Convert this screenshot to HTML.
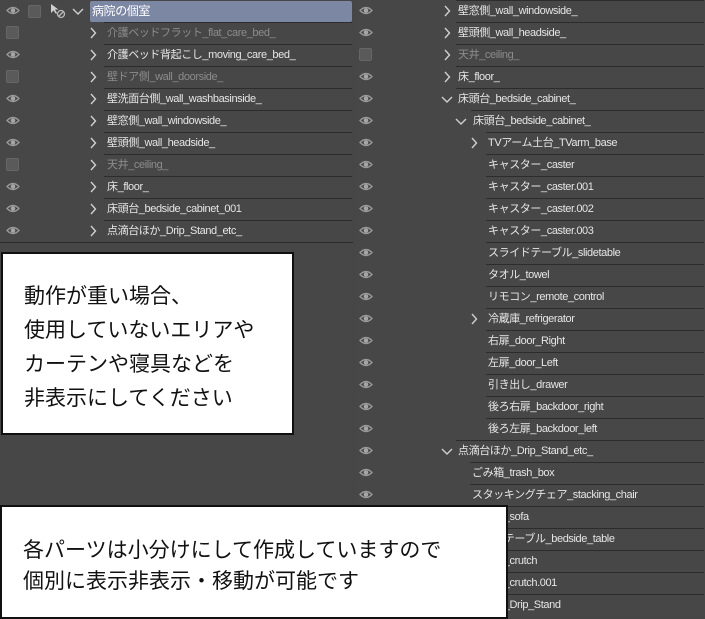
<!DOCTYPE html>
<html><head><meta charset="utf-8"><style>
*{margin:0;padding:0;box-sizing:border-box}
body{width:705px;height:617px;background:#464646;position:relative;overflow:hidden;font-family:"Liberation Sans","Noto Sans CJK JP",sans-serif;}
.p{position:absolute;top:0;height:617px;background:#474747}
.r{position:absolute;height:22px;left:0;width:100%}
.t{position:absolute;top:3px;font-size:11px;color:#e6e6e6;white-space:nowrap;letter-spacing:-0.4px;line-height:16px}
.g{color:#8c8c8c}
.ln{position:absolute;top:0;height:1px;background:#2c2c2c}
.eye{position:absolute;top:6px;width:14px;height:9px}
.cb{position:absolute;top:4px;width:13px;height:13px;background:#5a5a5a;border:1px solid #666;border-radius:2px}
.ch{position:absolute;top:5px;width:8px;height:12px}
.box{position:absolute;background:#fff;border:2px solid #111;color:#111;font-family:"Liberation Sans","Noto Sans CJK JP",sans-serif;font-size:21px}
</style></head><body>
<svg width="0" height="0" style="position:absolute"><defs>
<g id="e"><path d="M1 4.5 Q7 -1.5 13 4.5 Q7 10.5 1 4.5Z" fill="none" stroke="#9a9a9a" stroke-width="1.3"/><circle cx="7" cy="4.5" r="2.3" fill="#a5a5a5"/></g>
<g id="c"><path d="M2 1 L6.5 6 L2 11" fill="none" stroke="#cfcfcf" stroke-width="1.4"/></g>
<g id="d"><path d="M1 3 L6 8 L11 3" fill="none" stroke="#cfcfcf" stroke-width="1.4"/></g>
</defs></svg>

<div class="p" style="left:0;width:353px" id="L"></div>
<div class="p" style="left:355px;width:350px" id="R"></div>

<div class="box" style="left:1px;top:252px;width:293px;height:183px;padding:26px 0 0 21px;line-height:34px">動作が重い場合、<br>使用していないエリアや<br>カーテンや寝具などを<br>非表示にしてください</div>
<div class="box" style="left:0;top:505px;width:508px;height:114px;padding:28px 0 0 21px;line-height:31px">各パーツは小分けにして作成していますので<br>個別に表示非表示・移動が可能です</div>

<script>
function row(p,i,o){
 var r=document.createElement('div');r.className='r';r.style.top=(i*22)+'px';
 var h='';
 if(o.line!==undefined)h+='<div class="ln" style="left:'+o.line+'px;right:1px"></div>';
 if(o.hid)h+='<div class="cb" style="left:'+o.ex+'px"></div>';
 else h+='<svg class="eye" style="left:'+o.ex+'px" viewBox="0 0 14 9"><use href="#e"/></svg>';
 if(o.c)h+='<svg class="ch" style="left:'+o.c+'px" viewBox="0 0 8 12"><use href="#c"/></svg>';
 if(o.dn)h+='<svg style="position:absolute;top:6px;left:'+o.dn+'px;width:12px;height:10px" viewBox="0 0 12 10"><use href="#d"/></svg>';
 h+='<div class="t'+(o.hid?' g':'')+'" style="left:'+o.x+'px">'+o.t+'</div>';
 r.innerHTML=h;p.appendChild(r);
}
var L=document.getElementById('L'),R=document.getElementById('R');
var r0=document.createElement('div');r0.className='r';r0.style.top='0';
r0.innerHTML='<svg class="eye" style="left:6px" viewBox="0 0 14 9"><use href="#e"/></svg><div class="cb" style="left:28px;top:5px"></div>'+
'<svg style="position:absolute;left:50px;top:3px;width:16px;height:16px" viewBox="0 0 16 16"><path d="M1 1 L1 10 L3.5 7.5 L6 11 L7 10 L5 6.5 L8.5 6.5Z" fill="#cfcfcf"/><circle cx="11" cy="11" r="3.5" fill="none" stroke="#bbb" stroke-width="1.3"/><path d="M8.5 13.5 L13.5 8.5" stroke="#bbb" stroke-width="1.3"/></svg>'+
'<svg style="position:absolute;top:6px;left:72px;width:12px;height:10px" viewBox="0 0 12 10"><use href="#d"/></svg>'+
'<div style="position:absolute;left:90px;top:1px;width:262px;height:21px;background:#7c87a4;border-radius:2px"></div><div class="t" style="left:92px;top:3px;color:#fff;font-size:12px">病院の個室</div>';
L.appendChild(r0);
var la=[['介護ベッドフラット_flat_care_bed_',1],['介護ベッド背起こし_moving_care_bed_',0],['壁ドア側_wall_doorside_',1],['壁洗面台側_wall_washbasinside_',0],['壁窓側_wall_windowside_',0],['壁頭側_wall_headside_',0],['天井_ceiling_',1],['床_floor_',0],['床頭台_bedside_cabinet_001',0],['点滴台ほか_Drip_Stand_etc_',0]];
la.forEach(function(a,i){row(L,i+1,{t:a[0],hid:a[1],ex:6,c:89,x:107,line:104});});
var bl=document.createElement('div');bl.className='ln';bl.style.cssText='top:242px;left:0;width:353px';L.appendChild(bl);
var ra=[
['壁窓側_wall_windowside_',0,443,0,458],['壁頭側_wall_headside_',0,443,0,458],['天井_ceiling_',1,443,0,458],['床_floor_',0,443,0,458],
['床頭台_bedside_cabinet_',0,0,441,458],['床頭台_bedside_cabinet_',0,0,455,473],['TVアーム土台_TVarm_base',0,470,0,488],
['キャスター_caster',0,0,0,488],['キャスター_caster.001',0,0,0,488],['キャスター_caster.002',0,0,0,488],['キャスター_caster.003',0,0,0,488],
['スライドテーブル_slidetable',0,0,0,488],['タオル_towel',0,0,0,488],['リモコン_remote_control',0,0,0,488],['冷蔵庫_refrigerator',0,470,0,488],
['右扉_door_Right',0,0,0,488],['左扉_door_Left',0,0,0,488],['引き出し_drawer',0,0,0,488],['後ろ右扉_backdoor_right',0,0,0,488],['後ろ左扉_backdoor_left',0,0,0,488],
['点滴台ほか_Drip_Stand_etc_',0,0,441,458],['ごみ箱_trash_box',0,0,0,472],['スタッキングチェア_stacking_chair',0,0,0,472],['ソファ_sofa',0,0,0,472],
['サイドテーブル_bedside_table',0,0,0,472],['松葉杖_crutch',0,0,0,472],['松葉杖_crutch.001',0,0,0,472],['点滴台_Drip_Stand',0,0,0,472]];
ra.forEach(function(a,i){row(R,i,{t:a[0],hid:a[1],ex:4,c:a[2]?a[2]-355:0,dn:a[3]?a[3]-355:0,x:a[4]-355,line:(a[4]-357)});});
</script>
</body></html>
